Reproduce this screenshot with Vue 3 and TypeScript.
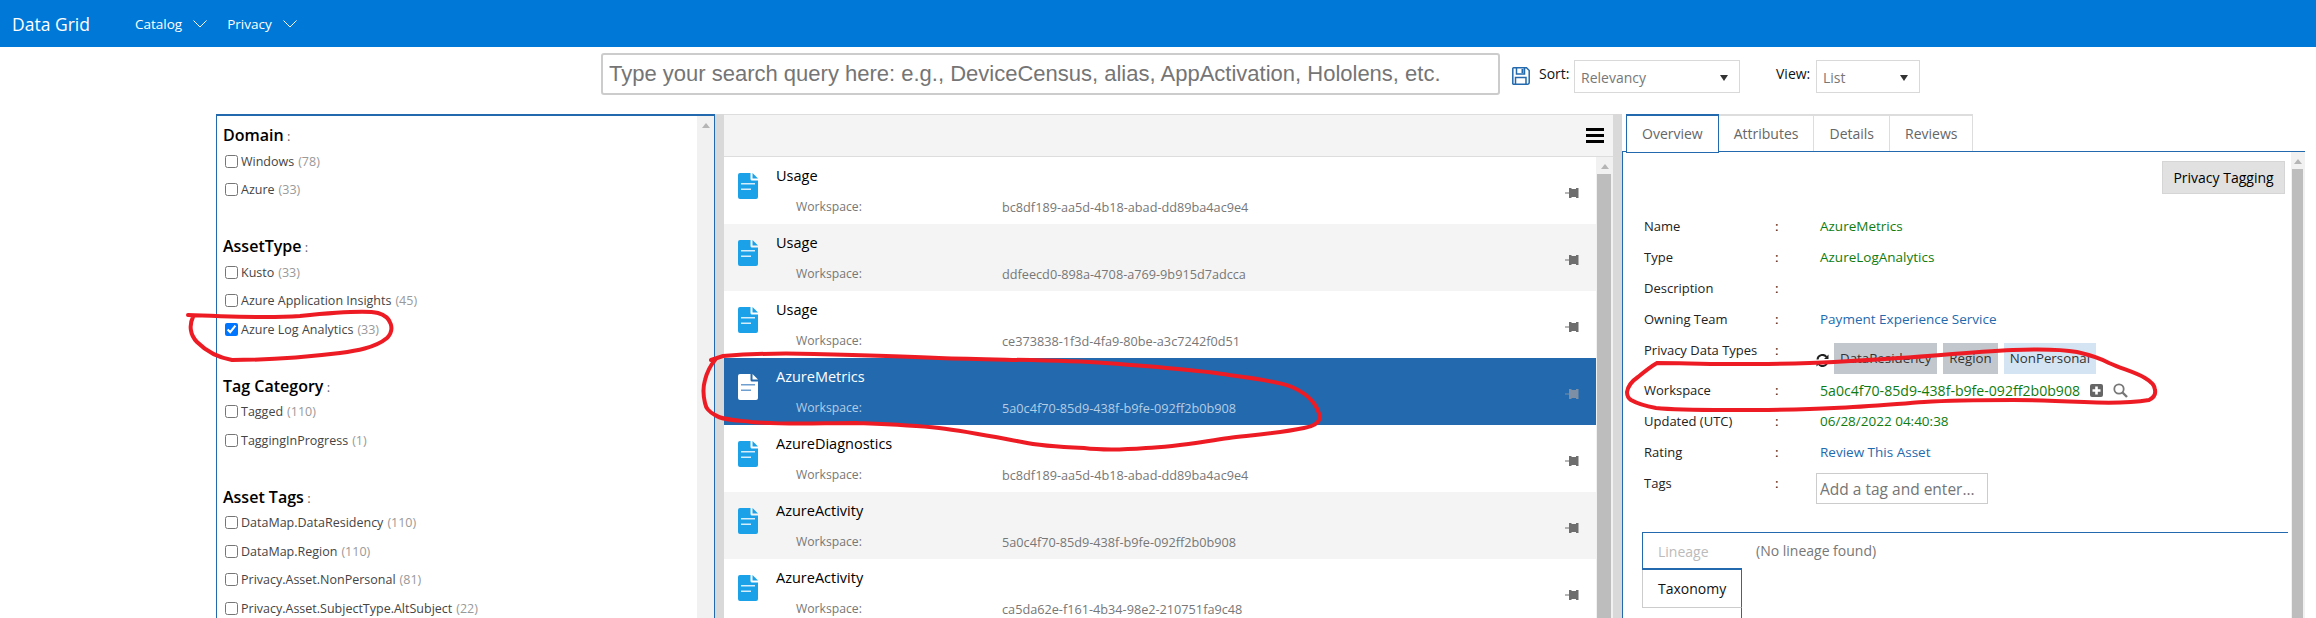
<template>
  <div class="page">
    <header class="topbar">
      <span class="brand">Data Grid</span>
      <nav class="nav">
        <span v-for="item in navItems" :key="item" class="nav-item">
          {{ item }}
          <svg class="chevron" viewBox="0 0 14 8" width="14" height="8">
            <path d="M.5.5 7 7 13.500.5" fill="none" stroke="#fff" stroke-width="1" />
          </svg>
        </span>
      </nav>
    </header>

    <div class="search-row">
      <input class="search-input" placeholder="Type your search query here: e.g., DeviceCensus, alias, AppActivation, Hololens, etc." />
      <svg class="save-icon" viewBox="0 0 18 18" width="18" height="18">
        <path d="M1.500.8h13l2.700 2.700v12a1.700 1.700 0 0 1-1.700 1.700h-14A.9.9 0 0 1 .8 16V1.500a.7.7 0 0 1 .7-.7z" fill="none" stroke="#2369ad" stroke-width="1.500" />
        <path d="M4.500 1v6h8V1M3.500 17v-6.500h10.500V17" fill="none" stroke="#2369ad" stroke-width="1.500" />
        <rect x="9.500" y="2" width="2" height="4" fill="#2369ad" />
      </svg>
      <span class="sort-label">Sort:</span>
      <div class="fake-select sort-select">Relevancy<i class="caret"></i></div>
      <span class="sort-label view-label">View:</span>
      <div class="fake-select view-select">List<i class="caret"></i></div>
    </div>

    <div class="panes">
      <aside class="filters">
        <div class="filter-list">
          <section v-for="group in filterGroups" :key="group.title" class="filter-group">
            <h3 class="filter-title">{{ group.title }}<span class="filter-colon"> :</span></h3>
            <label v-for="opt in group.options" :key="opt.name" class="filter-option">
              <input type="checkbox" :checked="opt.checked" />
              <span>{{ opt.name }}</span>
              <span class="count">({{ opt.count }})</span>
            </label>
          </section>
        </div>
        <div class="scroll-track"><i class="scroll-up"></i></div>
      </aside>

      <div class="splitter"></div>

      <main class="results">
        <div class="results-bar">
          <div class="hamburger"><i></i><i></i><i></i></div>
        </div>
        <div class="results-body">
          <div class="result-list">
            <div
              v-for="(row, i) in results"
              :key="i"
              class="result-row"
              :class="{ alt: i === 1 || i === 5, selected: i === 3 }"
            >
              <svg class="doc-icon" viewBox="0 0 20 26" width="20" height="26">
                <path class="doc-body" d="M2 0h10.500v6a1.500 1.500 0 0 0 1.500 1.500h6V24a2 2 0 0 1-2 2H2a2 2 0 0 1-2-2V2a2 2 0 0 1 2-2z" />
                <path class="doc-body" d="M14.500 0 20 5.500h-5.500z" />
                <rect class="doc-line" x="3" y="10" width="14" height="1.500" />
                <rect class="doc-line" x="3" y="15.500" width="10" height="1.500" />
              </svg>
              <div class="result-text">
                <div class="result-title">{{ row.title }}</div>
                <div class="result-meta">
                  <span class="meta-label">Workspace:</span>
                  <span class="meta-value">{{ row.workspace }}</span>
                </div>
              </div>
              <svg class="pin-icon" viewBox="0 0 14 10" width="14" height="10">
                <path d="M0 4.500h5v1H0z" />
                <path d="M4 0h2.500v1H11V0h2.500v10H11V9H6.500v1H4z" />
              </svg>
            </div>
          </div>
          <div class="scroll-track with-thumb"><i class="scroll-up"></i><div class="thumb"></div></div>
        </div>
      </main>

      <div class="splitter"></div>

      <section class="detail">
        <div class="tabs">
          <div v-for="(tab, i) in tabs" :key="tab" class="tab" :class="{ active: i === 0 }">{{ tab }}</div>
        </div>
        <div class="detail-body">
          <div class="detail-main">
            <div class="detail-actions"><button class="tag-button">Privacy Tagging</button></div>

            <div v-for="field in fields" :key="field.label" class="field">
              <span class="field-label">{{ field.label }}</span>
              <span class="field-colon">:</span>
              <span class="field-value" :class="field.kind">{{ field.value }}</span>
            </div>

            <div class="field field-tall">
              <span class="field-label">Privacy Data Types</span>
              <span class="field-colon">:</span>
              <div class="chips">
                <svg class="refresh-icon" viewBox="0 0 13 13" width="13" height="13">
                  <path d="M1.500 5.500A5 5 0 0 1 10.500 3M11.500 7.500A5 5 0 0 1 2.500 10" fill="none" stroke="#222" stroke-width="2" />
                  <path d="M12.500.5v4.500H8zM.5 12.500V8h4.500z" fill="#222" />
                </svg>
                <span class="chip">DataResidency</span>
                <span class="chip region">Region</span>
                <span class="chip personal">NonPersonal</span>
              </div>
            </div>

            <div class="field">
              <span class="field-label">Workspace</span>
              <span class="field-colon">:</span>
              <span class="field-value green guid">5a0c4f70-85d9-438f-b9fe-092ff2b0b908</span>
              <svg class="plus-icon" viewBox="0 0 13 13" width="13" height="13">
                <rect width="13" height="13" rx="2" fill="#666" />
                <path d="M5.200 2.500h2.600v2.700h2.700v2.600H7.800v2.700H5.200V7.800H2.500V5.200h2.700z" fill="#fff" />
              </svg>
              <svg class="find-icon" viewBox="0 0 15 15" width="15" height="15">
                <circle cx="6" cy="6" r="4.700" fill="none" stroke="#777" stroke-width="1.800" />
                <path d="m9.500 9.500 4.500 4.500" stroke="#777" stroke-width="2.400" />
              </svg>
            </div>

            <div v-for="field in lowerFields" :key="field.label" class="field">
              <span class="field-label">{{ field.label }}</span>
              <span class="field-colon">:</span>
              <span class="field-value" :class="field.kind">{{ field.value }}</span>
            </div>

            <div class="field">
              <span class="field-label">Tags</span>
              <span class="field-colon">:</span>
              <input class="tag-input" placeholder="Add a tag and enter..." />
            </div>

            <div class="lineage">
              <div class="lineage-side">
                <div class="side-tab current">Lineage</div>
                <div class="side-tab">Taxonomy</div>
                <div class="side-rest"></div>
              </div>
              <div class="lineage-empty">(No lineage found)</div>
            </div>
          </div>
          <div class="scroll-track detail-scroll with-thumb"><i class="scroll-up"></i><div class="thumb"></div></div>
        </div>
      </section>
    </div>

    <!-- hand drawn red marks from the screenshot -->
    <svg class="marks" viewBox="0 0 2316 618" width="2316" height="618">
      <path d="M188 315C230 316 260 319 300 316C330 313 365 310 378 313C392 317 395 330 387 338C375 348 355 351 340 353C315 356 270 360 232 360C215 357 205 350 197 342C190 335 189 325 193 317" />
      <path d="M711 360L723 356C760 353 780 353 814 354C860 355 900 356 939 358C1000 360 1060 360 1105 363C1160 367 1200 370 1229 375C1260 379 1280 382 1292 387C1310 395 1318 405 1320 418C1318 425 1310 427 1304 428C1280 433 1255 435 1229 438C1200 442 1175 447 1146 448C1120 450 1100 450 1084 448C1060 447 1040 446 1022 442C995 437 965 431 939 428C910 425 880 424 856 423C820 423 785 425 752 422C735 420 722 420 715 415C708 411 706 408 705 403C703 395 703 387 705 380C707 372 710 366 715 360" />
      <path d="M1657 363C1680 363 1700 364 1727 364C1765 364 1800 364 1834 362C1870 360 1905 358 1941 355C1965 353 1990 351 2013 350C2040 349 2060 349 2077 352C2090 355 2100 358 2109 363C2122 369 2135 372 2145 378C2152 382 2155 386 2155 390C2156 395 2153 398 2149 400C2130 403 2105 403 2084 402C2060 401 2035 400 2013 400C1985 400 1955 400 1924 402C1895 404 1865 407 1834 408C1800 410 1765 410 1727 410C1700 410 1675 410 1656 408C1645 406 1638 404 1631 400C1628 398 1627 395 1627 392C1628 386 1632 381 1638 377C1644 372 1650 367 1657 363" />
    </svg>
  </div>
</template>

<script setup lang="ts">
interface FilterOption {
  name: string
  count: number
  checked?: boolean
}

const navItems = ['Catalog', 'Privacy']
const tabs = ['Overview', 'Attributes', 'Details', 'Reviews']

const filterGroups: { title: string; options: FilterOption[] }[] = [
  {
    title: 'Domain',
    options: [
      { name: 'Windows', count: 78 },
      { name: 'Azure', count: 33 },
    ],
  },
  {
    title: 'AssetType',
    options: [
      { name: 'Kusto', count: 33 },
      { name: 'Azure Application Insights', count: 45 },
      { name: 'Azure Log Analytics', count: 33, checked: true },
    ],
  },
  {
    title: 'Tag Category',
    options: [
      { name: 'Tagged', count: 110 },
      { name: 'TaggingInProgress', count: 1 },
    ],
  },
  {
    title: 'Asset Tags',
    options: [
      { name: 'DataMap.DataResidency', count: 110 },
      { name: 'DataMap.Region', count: 110 },
      { name: 'Privacy.Asset.NonPersonal', count: 81 },
      { name: 'Privacy.Asset.SubjectType.AltSubject', count: 22 },
    ],
  },
]

const results = [
  { title: 'Usage', workspace: 'bc8df189-aa5d-4b18-abad-dd89ba4ac9e4' },
  { title: 'Usage', workspace: 'ddfeecd0-898a-4708-a769-9b915d7adcca' },
  { title: 'Usage', workspace: 'ce373838-1f3d-4fa9-80be-a3c7242f0d51' },
  { title: 'AzureMetrics', workspace: '5a0c4f70-85d9-438f-b9fe-092ff2b0b908' },
  { title: 'AzureDiagnostics', workspace: 'bc8df189-aa5d-4b18-abad-dd89ba4ac9e4' },
  { title: 'AzureActivity', workspace: '5a0c4f70-85d9-438f-b9fe-092ff2b0b908' },
  { title: 'AzureActivity', workspace: 'ca5da62e-f161-4b34-98e2-210751fa9c48' },
]

const fields = [
  { label: 'Name', value: 'AzureMetrics', kind: 'green' },
  { label: 'Type', value: 'AzureLogAnalytics', kind: 'green' },
  { label: 'Description', value: '', kind: '' },
  { label: 'Owning Team', value: 'Payment Experience Service', kind: 'link' },
]

const lowerFields = [
  { label: 'Updated (UTC)', value: '06/28/2022 04:40:38', kind: 'green' },
  { label: 'Rating', value: 'Review This Asset', kind: 'link' },
]
</script>

<style>
html,
body {
  margin: 0;
  background: #fff;
  overflow: hidden;
}
</style>

<style scoped>
.page {
  position: relative;
  width: 2316px;
  height: 618px;
  overflow: hidden;
  font-family: "Open Sans", "Noto Sans", sans-serif;
  color: #222;
}

.topbar {
  display: flex;
  align-items: center;
  height: 47px;
  background: #0078d7;
  color: #fff;
  padding-left: 12px;
  box-sizing: border-box;
}

.brand {
  width: 123px;
  font-size: 17.500px;
}

.nav {
  display: flex;
  gap: 20px;
}

.nav-item {
  display: flex;
  align-items: center;
  gap: 11px;
  font-size: 13.500px;
}

.search-row {
  display: flex;
  align-items: flex-start;
  height: 67px;
  box-sizing: border-box;
  padding: 6px 0 0 601px;
}

.search-input {
  width: 899px;
  height: 42px;
  box-sizing: border-box;
  border: 2px solid #ccc;
  border-radius: 3px;
  padding: 0 6px;
  font-family: "Liberation Sans", Arial, sans-serif;
  font-size: 22px;
  outline: none;
}

.search-input::placeholder,
.tag-input::placeholder {
  color: #757575;
  opacity: 1;
}

.save-icon {
  margin: 14px 0 0 12px;
}

.sort-label {
  margin: 11px 0 0 9px;
  width: 35px;
  font-size: 14px;
  line-height: 20px;
  color: #111;
}

.view-label {
  margin-left: 36px;
  width: 40px;
}

.fake-select {
  position: relative;
  box-sizing: border-box;
  height: 33px;
  margin-top: 7px;
  border: 1px solid #d9d9d9;
  padding: 7px 0 0 6px;
  font-size: 14px;
  line-height: 20px;
  color: #777;
}

.sort-select {
  width: 166px;
}

.view-select {
  width: 104px;
}

.caret {
  position: absolute;
  right: 11px;
  top: 14px;
  border-style: solid;
  border-width: 6px 4px 0;
  border-color: #333 transparent transparent;
}

.panes {
  display: flex;
  height: 504px;
  margin-left: 216px;
}

.filters {
  display: flex;
  width: 499px;
  flex: none;
  box-sizing: border-box;
  border-top: 2px solid #2369ad;
  border-left: 1px solid #2369ad;
  border-right: 1px solid #2369ad;
}

.filter-list {
  flex: 1;
  padding: 8px 0 0 6px;
}

.filter-group {
  margin-bottom: 31px;
}

.filter-title {
  margin: 0;
  font-size: 16px;
  font-weight: 600;
  line-height: 22px;
  color: #000;
}

.filter-colon {
  font-weight: 400;
  font-size: 13px;
  color: #666;
}

.filter-option {
  display: flex;
  align-items: center;
  gap: 3px;
  height: 28.500px;
  margin-left: 2px;
  font-size: 12.500px;
  color: #444;
}

.filter-option input {
  width: 13px;
  height: 13px;
  margin: 0;
}

.count {
  margin-left: 1px;
  color: #999;
}

.scroll-track {
  position: relative;
  width: 17px;
  background: #f1f1f1;
  flex: none;
}

.scroll-up {
  display: block;
  width: 0;
  margin: 7px auto 0;
  border-style: solid;
  border-width: 0 4px 5px;
  border-color: transparent transparent #b5b5b5;
}

.thumb {
  position: absolute;
  left: 1px;
  right: 2px;
  top: 17px;
  bottom: 0;
  background: #bdbdbd;
}

.splitter {
  width: 9px;
  flex: none;
  background: #d9d9d9;
}

.results {
  width: 889px;
  flex: none;
}

.results-bar {
  display: flex;
  align-items: center;
  justify-content: flex-end;
  height: 43px;
  box-sizing: border-box;
  padding-right: 9px;
  background: #f4f4f4;
  border-top: 1px solid #ddd;
  border-bottom: 1px solid #ddd;
}

.hamburger {
  display: flex;
  flex-direction: column;
  gap: 3px;
  width: 18px;
}

.hamburger i {
  display: block;
  height: 3px;
  background: #000;
}

.results-body {
  display: flex;
  height: 461px;
}

.result-list {
  flex: 1;
  overflow: hidden;
}

.result-row {
  display: flex;
  align-items: flex-start;
  height: 67px;
  padding: 0 17px 0 14px;
  background: #fff;
}

.result-row.alt {
  background: #f4f4f4;
}

.result-row.selected {
  background: #2369ad;
}

.doc-icon {
  margin-top: 16px;
  flex: none;
}

.doc-body {
  fill: #1ba1e8;
}

.doc-line {
  fill: #d6eefb;
}

.selected .doc-body {
  fill: #fff;
}

.selected .doc-line {
  fill: #6f9fd0;
}

.result-text {
  flex: 1;
  margin-left: 18px;
  padding-top: 9px;
}

.result-title {
  font-size: 14.500px;
  line-height: 20px;
  color: #000;
}

.selected .result-title {
  color: #fff;
}

.result-meta {
  display: flex;
  margin: 12px 0 0 20px;
  font-size: 12.200px;
  line-height: 18px;
  color: #777;
}

.selected .result-meta {
  color: #b4cde6;
}

.meta-label {
  width: 206px;
}

.meta-value {
  font-size: 12.700px;
}

.pin-icon {
  flex: none;
  margin-top: 31px;
  fill: #6e6e6e;
}

.selected .pin-icon {
  fill: #7c8fa5;
}

.detail {
  width: 683px;
  flex: none;
  box-sizing: border-box;
}

.tabs {
  display: flex;
  align-items: flex-start;
  height: 37px;
  padding-left: 4px;
}

.tab {
  box-sizing: border-box;
  height: 37px;
  padding: 0 15px;
  border-top: 2px solid #ddd;
  border-right: 1px solid #ddd;
  font-size: 14px;
  line-height: 35px;
  color: #666;
}

.tab.active {
  position: relative;
  z-index: 1;
  height: 39px;
  background: #fff;
  border: 1px solid #2369ad;
  border-top-width: 2px;
}

.detail-body {
  display: flex;
  height: 467px;
  box-sizing: border-box;
  border-top: 1px solid #2369ad;
  border-left: 1px solid #2369ad;
}

.detail-main {
  flex: 1;
  min-width: 0;
  padding-left: 21px;
}

.detail-actions {
  display: flex;
  justify-content: flex-end;
  padding: 9px 6px 17px 0;
}

.tag-button {
  height: 33px;
  width: 123px;
  padding: 0;
  background: #e1e1e1;
  border: 1px solid #d5d5d5;
  font-family: inherit;
  font-size: 14px;
  color: #000;
}

.field {
  display: flex;
  align-items: flex-start;
  height: 31px;
  font-size: 13.500px;
  line-height: 31px;
}

.field-tall {
  height: 40px;
}

.field-label {
  width: 131px;
  flex: none;
  font-size: 13px;
  color: #222;
  white-space: nowrap;
}

.field-colon {
  width: 45px;
  flex: none;
}

.guid {
  font-size: 14.100px;
}

.green {
  color: #107c10;
}

.link {
  color: #2369ad;
}

.chips {
  display: flex;
  align-items: flex-start;
  margin: 8px 0 0 -4px;
  font-size: 13.300px;
}

.refresh-icon {
  margin: 11px 5px 0 0;
}

.chip {
  height: 31px;
  padding: 0 6px;
  margin-right: 6px;
  background: #c2c7ce;
  color: #333;
}

.chip.personal {
  background: #d5e4f2;
}

.plus-icon {
  margin: 9px 0 0 10px;
}

.find-icon {
  margin: 8px 0 0 10px;
}

.tag-input {
  box-sizing: border-box;
  width: 172px;
  height: 31px;
  margin: 5px 0 0 -4px;
  border: 1px solid #ccc;
  padding: 0 3px;
  font-family: inherit;
  font-size: 15.500px;
  outline: none;
}

.lineage {
  display: flex;
  height: 90px;
  margin: 33px 3px 0 -2px;
  border-top: 1px solid #2369ad;
}

.lineage-side {
  display: flex;
  flex-direction: column;
  width: 100px;
  flex: none;
}

.side-tab {
  box-sizing: border-box;
  height: 38px;
  padding-left: 15px;
  border-left: 1px solid #ccc;
  border-bottom: 1px solid #ccc;
  border-right: 1px solid #2369ad;
  font-size: 14px;
  line-height: 38px;
  color: #111;
}

.side-tab.current {
  height: 37px;
  border-left-color: #2369ad;
  border-bottom: 2px solid #2369ad;
  border-right: none;
  color: #bbb;
}

.side-rest {
  flex: 1;
  border-right: 1px solid #2369ad;
}

.lineage-empty {
  padding: 7px 0 0 14px;
  font-size: 14px;
  line-height: 22px;
  color: #777;
}

.detail-scroll {
  width: 14px;
}

.marks {
  position: absolute;
  left: 0;
  top: 0;
  pointer-events: none;
}

.marks path {
  fill: none;
  stroke: #ed1c24;
  stroke-width: 4;
  stroke-linecap: round;
}
</style>
